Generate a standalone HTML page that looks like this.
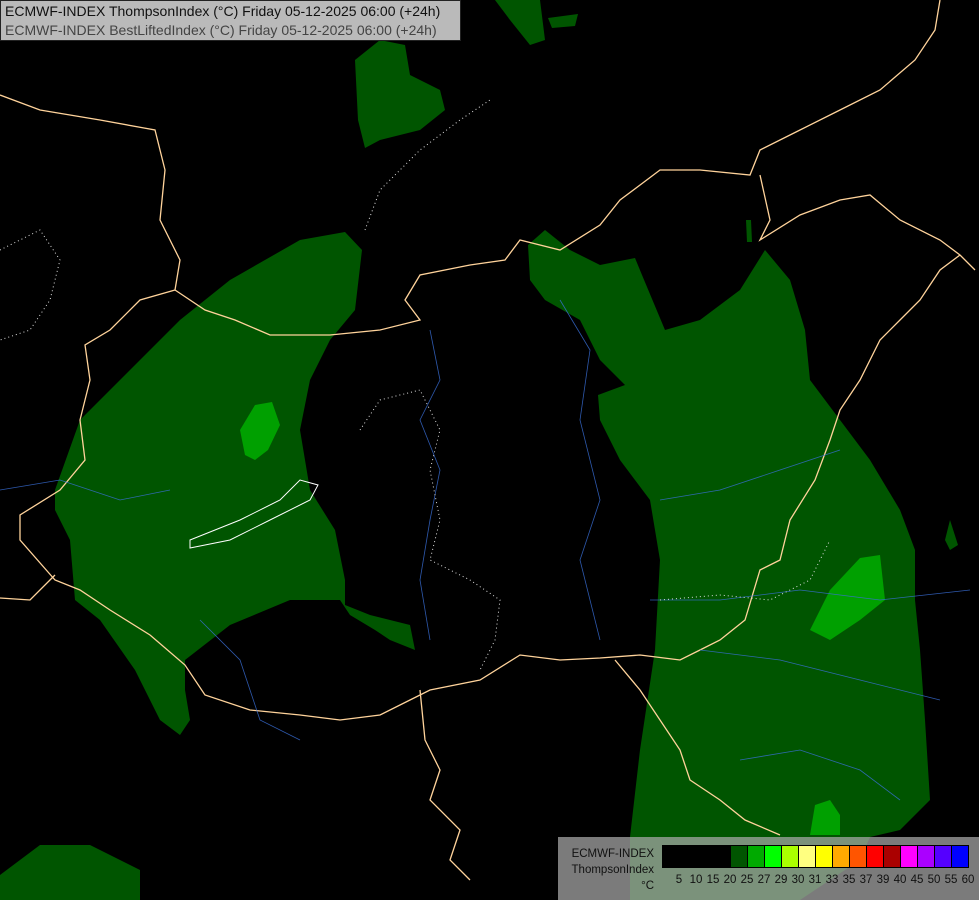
<!DOCTYPE html>
<html><head><meta charset="utf-8"><style>
html,body{margin:0;padding:0;background:#000;}
body{width:979px;height:900px;position:relative;overflow:hidden;font-family:"Liberation Sans",sans-serif;}
svg{position:absolute;left:0;top:0;}
.hdr{position:absolute;left:0;top:0;width:461px;height:41px;background:rgba(200,200,200,0.93);border:1px solid #222;box-sizing:border-box;font-size:14px;line-height:19px;padding:1px 0 0 4px;color:#111;white-space:nowrap;}
.hdr .l2{color:#444;}
.leg{position:absolute;left:558px;top:837px;width:421px;height:63px;background:rgba(170,170,170,0.72);}
.leg .t{position:absolute;left:6px;top:9px;font-size:11.5px;line-height:16px;color:#111;text-align:right;width:90px;}
.bar{position:absolute;left:104px;top:8px;display:flex;border:1px solid #000;}
.bar div{width:16px;height:21px;border-right:1px solid #000;}
.bar div:last-child{border-right:none;}
.lab{position:absolute;top:37px;font-size:11.5px;color:#111;transform:translateX(-50%);}
</style></head><body>
<svg width="979" height="900" viewBox="0 0 979 900">
<g fill="#005500">
<polygon points="55,490 80,420 120,380 180,320 230,280 300,240 345,232 362,250 355,310 330,340 310,380 300,430 310,490 335,530 345,580 345,605 370,615 410,625 415,650 390,640 375,630 350,615 340,600 290,600 230,625 185,660 185,690 190,720 180,735 160,720 135,670 100,620 75,600 70,540 55,510"/>
<polygon points="355,60 380,40 405,45 410,75 440,90 445,110 420,130 380,140 365,148 358,120"/>
<polygon points="495,0 540,0 545,40 530,45 510,20"/>
<polygon points="548,18 578,14 575,26 552,28"/>
<polygon points="528,245 545,230 570,250 600,265 635,258 642,275 665,330 700,320 740,290 765,250 790,280 805,330 810,380 840,420 870,460 900,510 915,550 915,600 920,650 925,720 930,800 900,830 870,837 630,837 640,750 655,650 660,560 650,500 620,460 600,420 598,395 625,385 600,360 580,320 545,300 530,280"/>
<polygon points="0,875 40,845 90,845 140,870 140,900 0,900"/>
<polygon points="945,540 950,520 958,545 950,550"/>
<polygon points="746,220 751,220 752,242 747,242"/>
<polygon points="630,837 870,837 860,860 800,900 630,900"/>
</g>
<g fill="#00a000">
<polygon points="240,430 255,405 272,402 280,425 268,450 255,460 245,455"/>
<polygon points="810,630 830,590 860,558 880,555 885,600 860,620 830,640"/>
<polygon points="810,835 815,805 830,800 840,815 840,835"/>
</g>
<g fill="none" stroke="#ffd39b" stroke-width="1.3">
<polyline points="0,95 40,110 100,120 155,130 165,170 160,220 180,260 175,290 205,310 235,320 270,335 330,335 380,330 420,320 405,300 420,275 470,265 505,260 520,240 560,250 600,225 620,200 660,170 700,170 750,175 760,150 800,130 840,110 880,90 915,60 935,30 940,0"/>
<polyline points="760,175 770,220 760,240 800,215 840,200 870,195 900,220 940,240 960,255 975,270"/>
<polyline points="175,290 140,300 110,330 85,345 90,380 80,420 85,460 60,490 20,515 20,540 55,580 80,590 110,610 150,635 185,665 205,695 250,710 300,715 340,720 380,715 410,700 430,690 480,680 520,655 560,660 600,658 640,655 680,660 700,650 720,640 745,620 760,570 780,560 790,520 815,480 830,440 840,410 860,380 880,340 900,320 920,300 940,270 960,255"/>
<polyline points="420,690 425,740 440,770 430,800 460,830 450,860 470,880"/>
<polyline points="615,660 640,690 660,720 680,750 690,780 720,800 745,820 780,835"/>
<polyline points="0,598 30,600 55,575"/>
</g>
<g fill="none" stroke="#3a6fd8" stroke-width="0.8" opacity="0.8">
<polyline points="430,330 440,380 420,420 440,470 430,520 420,580 430,640"/>
<polyline points="560,300 590,350 580,420 600,500 580,560 600,640"/>
<polyline points="660,500 720,490 780,470 840,450"/>
<polyline points="650,600 720,600 800,590 880,600 970,590"/>
<polyline points="700,650 780,660 860,680 940,700"/>
<polyline points="0,490 60,480 120,500 170,490"/>
<polyline points="200,620 240,660 260,720 300,740"/>
<polyline points="740,760 800,750 860,770 900,800"/>
</g>
<g fill="none" stroke="#ddd" stroke-width="1" stroke-dasharray="1,3">
<polyline points="365,230 380,190 420,150 460,120 490,100"/>
<polyline points="360,430 380,400 420,390 440,430 430,470 440,520 430,560 470,580 500,600 495,640 480,670"/>
<polyline points="0,250 40,230 60,260 50,300 30,330 0,340"/>
<polyline points="660,600 720,595 770,600 810,580 830,540"/>
</g>
<polygon points="190,540 240,520 280,500 300,480 318,485 310,500 270,520 230,540 190,548" fill="none" stroke="#fff" stroke-width="1"/>
</svg>
<div class="hdr">ECMWF-INDEX ThompsonIndex (°C) Friday 05-12-2025 06:00 (+24h)<br><span class="l2">ECMWF-INDEX BestLiftedIndex (°C) Friday 05-12-2025 06:00 (+24h)</span></div>
<div class="leg">
<div class="t">ECMWF-INDEX<br>ThompsonIndex<br>°C</div>
<div class="bar">
<div style="background:#000"></div><div style="background:#000"></div><div style="background:#000"></div><div style="background:#000"></div>
<div style="background:#005500"></div><div style="background:#00aa00"></div><div style="background:#00ff00"></div><div style="background:#aaff00"></div>
<div style="background:#ffff80"></div><div style="background:#ffff00"></div><div style="background:#ffaa00"></div><div style="background:#ff5500"></div>
<div style="background:#ff0000"></div><div style="background:#aa0000"></div><div style="background:#ff00ff"></div><div style="background:#aa00ff"></div>
<div style="background:#5500ff"></div><div style="background:#0000ff"></div>
</div>
<span class="lab" style="left:121px">5</span><span class="lab" style="left:138px">10</span><span class="lab" style="left:155px">15</span><span class="lab" style="left:172px">20</span><span class="lab" style="left:189px">25</span><span class="lab" style="left:206px">27</span><span class="lab" style="left:223px">29</span><span class="lab" style="left:240px">30</span><span class="lab" style="left:257px">31</span><span class="lab" style="left:274px">33</span><span class="lab" style="left:291px">35</span><span class="lab" style="left:308px">37</span><span class="lab" style="left:325px">39</span><span class="lab" style="left:342px">40</span><span class="lab" style="left:359px">45</span><span class="lab" style="left:376px">50</span><span class="lab" style="left:393px">55</span><span class="lab" style="left:410px">60</span>
</div>
</body></html>
